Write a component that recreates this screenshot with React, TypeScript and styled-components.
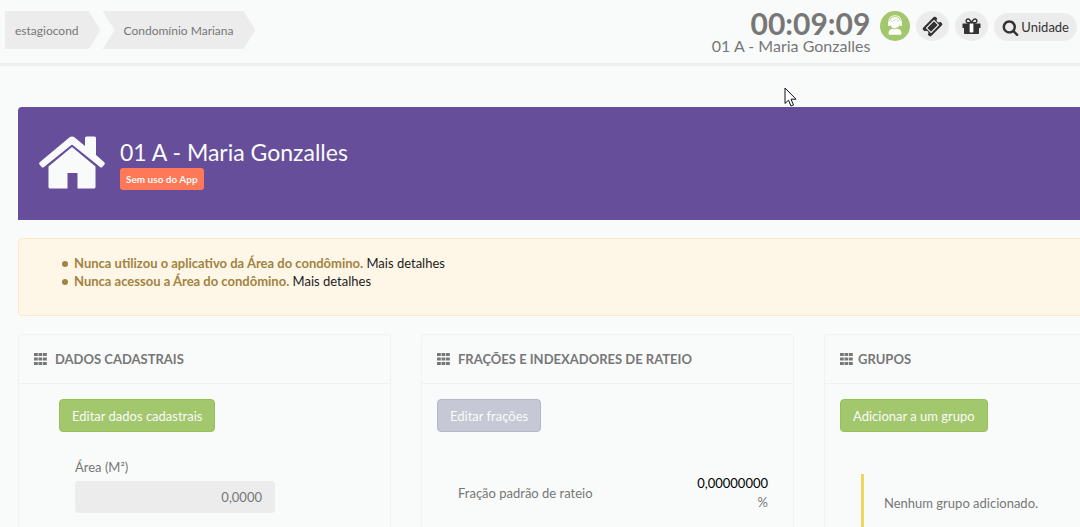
import React from "react";
import styled, { createGlobalStyle } from "styled-components";

const GlobalStyle = createGlobalStyle`
  * { box-sizing: border-box; }
  body {
    margin: 0;
    background: #f9fbfa;
    color: #777;
    font-family: Lato, "Liberation Sans", sans-serif;
    font-size: 13px;
    line-height: 18px;
  }
  button, input { font: inherit; }
  a { text-decoration: none; }
  h1, h2, p, ul { margin: 0; }
`;

const Shell = styled.div`
  min-height: 100vh;
  overflow: hidden;
`;

const TopBar = styled.header`
  position: relative;
  display: flex;
  justify-content: space-between;
  align-items: flex-start;
  height: 66px;
  padding: 11px 3px 0 5px;
  border-bottom: 3px solid #eeefef;
`;

const Breadcrumb = styled.nav`
  display: flex;
  gap: 2px;
`;

const Crumb = styled.a<{ $first?: boolean }>`
  height: 38px;
  padding: 0 22px 0 ${(p) => (p.$first ? 10 : 21)}px;
  background: #ececec;
  color: #777;
  font-size: 12px;
  line-height: 40px;
  clip-path: ${(p) =>
    p.$first
      ? "polygon(0 0, calc(100% - 12px) 0, 100% 50%, calc(100% - 12px) 100%, 0 100%)"
      : "polygon(0 0, calc(100% - 12px) 0, 100% 50%, calc(100% - 12px) 100%, 0 100%, 12px 50%)"};
`;

const Tools = styled.div`
  display: flex;
  gap: 6px;
`;

const Timer = styled.div`
  margin-right: 4px;
  text-align: right;
`;

const Clock = styled.div`
  font-size: 30px;
  font-weight: 700;
  line-height: 25px;
`;

const Caller = styled.div`
  font-size: 16px;
  line-height: 20px;
`;

const RoundButton = styled.button<{ $green?: boolean }>`
  display: flex;
  align-items: center;
  justify-content: center;
  width: ${(p) => (p.$green ? 30 : 33)}px;
  height: 30px;
  padding: 0;
  border: 0;
  border-radius: 50%;
  background: ${(p) => (p.$green ? "#a2c76d" : "#ececec")};
  color: #333;
`;

const SearchButton = styled.button`
  display: flex;
  align-items: center;
  gap: 2px;
  height: 28px;
  margin-top: 2px;
  padding: 0 8px;
  border: 0;
  border-radius: 14px;
  background: #ececec;
  color: #333;
`;

const Main = styled.main`
  display: grid;
  gap: 18px;
  margin: 41px -117px 0 18px;
`;

const Banner = styled.section`
  display: flex;
  align-items: center;
  gap: 15px;
  height: 113px;
  padding: 0 21px 2px;
  border-radius: 4px 4px 0 0;
  background: #674e9b;
  color: #f9fbfa;
`;

const BannerTitle = styled.h1`
  padding-top: 2px;
  font-size: 23px;
  font-weight: 400;
  line-height: 31px;
`;

const Badge = styled.span`
  display: block;
  width: fit-content;
  padding: 0 6px;
  border-radius: 3px;
  background: #ff7857;
  font-size: 10px;
  font-weight: 700;
  line-height: 22px;
`;

const Alert = styled.section`
  min-height: 78px;
  padding: 15px;
  border: 1px solid #fbe8cd;
  border-radius: 4px;
  background: #fef6e7;
  color: #a1833f;
`;

const AlertList = styled.ul`
  padding-left: 40px;
  list-style: none;
`;

const AlertItem = styled.li`
  &::before {
    content: "";
    display: inline-block;
    width: 6px;
    height: 6px;
    margin: 0 6px 0 -12px;
    border-radius: 50%;
    background: currentColor;
    vertical-align: 1px;
  }
`;

const DetailLink = styled.a`
  color: #222;
`;

const Cards = styled.div`
  display: grid;
  grid-template-columns: repeat(3, 1fr);
  gap: 30px;
`;

const Card = styled.section`
  min-height: 240px;
  border: 1px solid #eff1f3;
  border-radius: 4px;
`;

const CardTitle = styled.h2<{ $tight?: boolean }>`
  display: flex;
  align-items: center;
  gap: ${(p) => (p.$tight ? 5 : 8)}px;
  height: 49px;
  padding: 0 15px;
  border-bottom: 1px solid #eff1f3;
  font-size: 13px;
  font-weight: 700;
  text-transform: uppercase;
`;

const CardBody = styled.div<{ $inset?: boolean }>`
  padding: 15px ${(p) => (p.$inset ? 40 : 15)}px;
`;

const ActionButton = styled.button<{ $muted?: boolean }>`
  height: 33px;
  padding: 0 12px;
  border: 1px solid ${(p) => (p.$muted ? "#b5b7c8" : "#96c159")};
  border-radius: 4px;
  background: ${(p) => (p.$muted ? "#c7c8d5" : "#a2c76d")};
  color: #f9fbfa;
`;

const Field = styled.div`
  display: grid;
  gap: 5px;
  width: 200px;
  margin: 26px 16px 0;
`;

const AreaInput = styled.input`
  width: 100%;
  height: 32px;
  padding: 0 13px;
  border: 0;
  border-radius: 4px;
  background: #ececec;
  color: #777;
  text-align: right;
`;

const FractionRow = styled.div`
  display: flex;
  align-items: center;
  justify-content: space-between;
  margin: 42px 10px 0 21px;
`;

const FractionValue = styled.div`
  text-align: right;
  line-height: 19px;
`;

const Amount = styled.div`
  color: #000;
`;

const EmptyNote = styled.p`
  margin: 42px 21px 0;
  padding: 20px;
  border-left: 3px solid #f3d45f;
`;

const Cursor = styled.svg`
  position: absolute;
  left: 784px;
  top: 87px;
`;

const Glyph = ({ d, size, back }: { d: string; size: number; back?: string }) => (
  <svg width={size} height={size} viewBox="0 0 1792 1792" fill="currentColor" aria-hidden="true">
    {back && <path d={back} fill="#fff" />}
    <path d={d} />
  </svg>
);

const TICKET =
  "M1024 452l316 316-572 572-316-316zm-211 979l618-618q19-19 19-45t-19-45l-362-362q-18-18-45-18t-45 18l-618 618q-19 19-19 45t19 45l362 362q18 18 45 18t45-18zm889-637l-907 908q-37 37-90.5 37t-90.5-37l-126-126q56-56 56-136t-56-136-136-56-136 56l-125-126q-37-37-37-90.5t37-90.5l907-906q37-37 90.5-37t90.5 37l125 125q-56 56-56 136t56 136 136 56 136-56l126 125q37 37 37 90.5t-37 90.5z";
const TICKET_BACK = "M1024 343L1450 768 768 1450 342 1024z";
const GIFT =
  "M1056 1356v-716h-320v716q0 25 18 38.5t46 13.5h192q28 0 46-13.5t18-38.5zm-456-844h195l-126-161q-26-31-69-31-40 0-68 28t-28 68 28 68 68 28zm688-96q0-40-28-68t-68-28q-43 0-69 31l-125 161h194q40 0 68-28t28-68zm376 256v320q0 14-9 23t-23 9h-96v416q0 40-28 68t-68 28h-1088q-40 0-68-28t-28-68v-416h-96q-14 0-23-9t-9-23v-320q0-14 9-23t23-9h440q-93 0-158.5-65.5t-65.5-158.5 65.5-158.5 158.5-65.5q107 0 168 77l128 165 128-165q61-77 168-77 93 0 158.5 65.5t65.5 158.5-65.5 158.5-158.5 65.5h440q14 0 23 9t9 23z";
const GIFT_BACK = "M736 640H1056V1408H736z";
const SEARCH =
  "M1216 832q0-185-131.5-316.5t-316.5-131.5-316.5 131.5-131.5 316.5 131.5 316.5 316.5 131.5 316.5-131.5 131.5-316.5zm512 832q0 52-38 90t-90 38q-54 0-90-38l-343-342q-179 124-399 124-143 0-273.5-55.5t-225-150-150-225-55.5-273.5 55.5-273.5 150-225 225-150 273.5-55.5 273.5 55.5 225 150 150 225 55.5 273.5q0 220-124 399l343 343q37 37 37 90z";

const Support = () => (
  <svg width="30" height="30" viewBox="0 0 30 30" aria-hidden="true">
    <path d="M10 10.500Q10 6 15 6t5 4.500v2Q19 17.500 15 17.500T10 12.500z" fill="#fff" />
    <path d="M9 10q0-5.200 6-5.200t6 5.200" fill="none" stroke="#fff" strokeWidth="1" />
    <rect x="8" y="10" width="2.500" height="5" rx="1" fill="#fff" />
    <rect x="19.500" y="10" width="2.500" height="5" rx="1" fill="#fff" />
    <path d="M10.800 10.500Q15 10 16.500 8.200q.8 1.800 2.700 2.300M19 15q-1 1.600-3.500 1.600" fill="none" stroke="#a2c76d" strokeWidth=".5" />
    <path d="M8.500 22.500q0-4.300 4-4.800 2.500 1.300 5 0 4 .5 4 4.800 0 1.200-1.500 1.200h-10q-1.500 0-1.500-1.200z" fill="#fff" />
  </svg>
);

const House = () => (
  <svg width="66" height="54" viewBox="0 0 66 54" fill="currentColor" aria-hidden="true">
    <path d="M30 1.800Q33 -.8 36 1.800L46 10V2q0-1.500 1.500-1.500h8Q57 .5 57 2v17l8 7q1.500 1.300 .3 2.700l-2 2.200q-1 1-2.300 0L33 8.500 5 31q-1.300 1-2.300 0L.7 28.700Q-.5 27.300 1 26z" />
    <path d="M33 11L56.500 30.500v20.500q0 1.500-1.500 1.500H38.500v-15.500h-10v15.500H11q-1.500 0-1.500-1.500V30.500z" />
  </svg>
);

const GridIcon = () => (
  <svg width="13" height="12" viewBox="0 0 13 12" fill="currentColor" aria-hidden="true">
    {[0, 4.5, 9].map((y) =>
      [0, 4.5, 9].map((x) => <rect key={`${x}-${y}`} x={x} y={y} width={3.8} height={3} />),
    )}
  </svg>
);

export default function App() {
  return (
    <Shell>
      <GlobalStyle />
      <TopBar>
        <Breadcrumb aria-label="Navegação">
          <Crumb href="#" $first>estagiocond</Crumb>
          <Crumb href="#">Condomínio Mariana</Crumb>
        </Breadcrumb>
        <Tools>
          <Timer>
            <Clock>00:09:09</Clock>
            <Caller>01 A - Maria Gonzalles</Caller>
          </Timer>
          <RoundButton $green aria-label="Atendimento"><Support /></RoundButton>
          <RoundButton aria-label="Tickets"><Glyph d={TICKET} back={TICKET_BACK} size={21} /></RoundButton>
          <RoundButton aria-label="Novidades"><Glyph d={GIFT} back={GIFT_BACK} size={21} /></RoundButton>
          <SearchButton><Glyph d={SEARCH} size={17} />Unidade</SearchButton>
        </Tools>
        <Cursor width="13" height="20" viewBox="0 0 13 20" aria-hidden="true">
          <path d="M1 1v15.500l3.500-3.300 2.500 5.800 2.500-1-2.500-5.800h5z" fill="#fff" stroke="#112" strokeWidth="1" />
        </Cursor>
      </TopBar>
      <Main>
        <Banner>
          <House />
          <div>
            <BannerTitle>01 A - Maria Gonzalles</BannerTitle>
            <Badge>Sem uso do App</Badge>
          </div>
        </Banner>
        <Alert>
          <AlertList>
            <AlertItem><b>Nunca utilizou o aplicativo da Área do condômino.</b> <DetailLink href="#">Mais detalhes</DetailLink></AlertItem>
            <AlertItem><b>Nunca acessou a Área do condômino.</b> <DetailLink href="#">Mais detalhes</DetailLink></AlertItem>
          </AlertList>
        </Alert>
        <Cards>
          <Card>
            <CardTitle><GridIcon />Dados cadastrais</CardTitle>
            <CardBody $inset>
              <ActionButton>Editar dados cadastrais</ActionButton>
              <Field>
                <label htmlFor="area">Área (M²)</label>
                <AreaInput id="area" defaultValue="0,0000" readOnly />
              </Field>
            </CardBody>
          </Card>
          <Card>
            <CardTitle><GridIcon />Frações e indexadores de rateio</CardTitle>
            <CardBody>
              <ActionButton $muted>Editar frações</ActionButton>
              <FractionRow>
                <span>Fração padrão de rateio</span>
                <FractionValue><Amount>0,00000000</Amount>%</FractionValue>
              </FractionRow>
            </CardBody>
          </Card>
          <Card>
            <CardTitle $tight><GridIcon />Grupos</CardTitle>
            <CardBody>
              <ActionButton>Adicionar a um grupo</ActionButton>
              <EmptyNote>Nenhum grupo adicionado.</EmptyNote>
            </CardBody>
          </Card>
        </Cards>
      </Main>
    </Shell>
  );
}
